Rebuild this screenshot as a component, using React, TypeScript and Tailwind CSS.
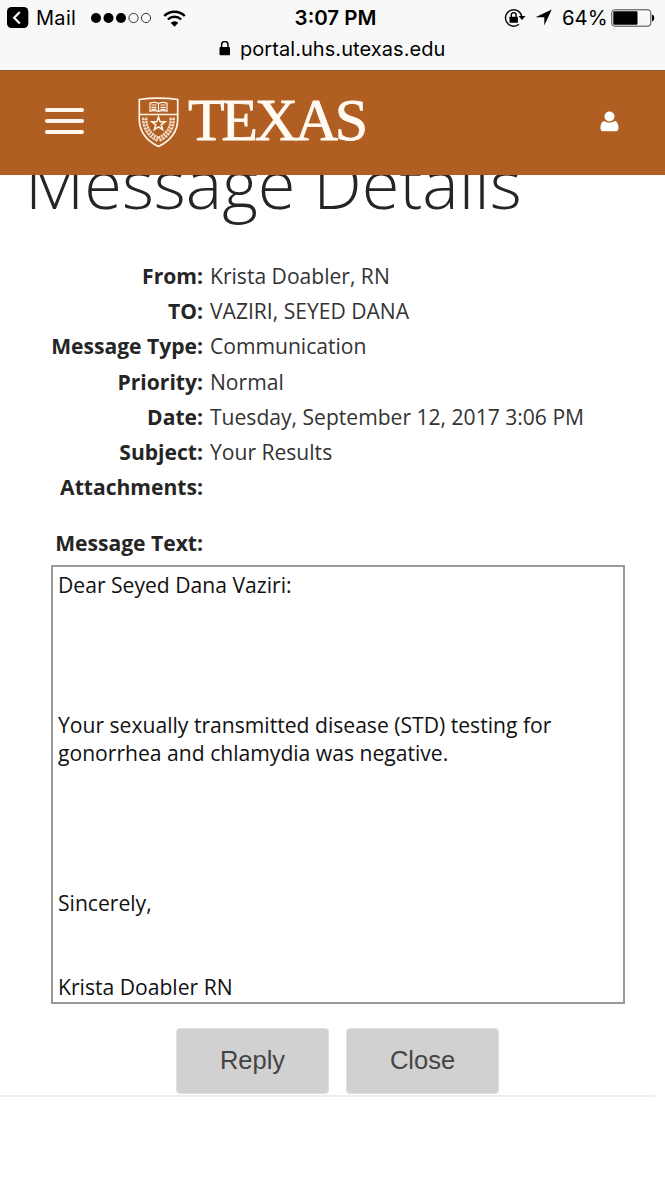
import React from "react";

const details: [string, string][] = [
  ["From:", "Krista Doabler, RN"],
  ["TO:", "VAZIRI, SEYED DANA"],
  ["Message Type:", "Communication"],
  ["Priority:", "Normal"],
  ["Date:", "Tuesday, September 12, 2017 3:06 PM"],
  ["Subject:", "Your Results"],
  ["Attachments:", ""],
];

function StatusBar() {
  return (
    <div className="h-[70px] bg-[#f8f8f8] font-['Inter',sans-serif] text-black">
      <div className="grid h-9 grid-cols-[1fr_auto_1fr] items-center whitespace-nowrap">
        <div className="flex items-center pl-[7px]">
          <svg width="22" height="22" viewBox="0 0 22 22">
            <rect x="0" y="0" width="21.3" height="21" rx="4.5" />
            <path d="M12.8 5 7.2 10.7l5.6 5.700" fill="none" stroke="#f8f8f8" strokeWidth="2.2" />
          </svg>
          <span className="ml-[7px] w-[55px] text-[20px] leading-none tracking-[0.3px]">Mail</span>
          <svg width="62" height="12" viewBox="0 0 62 12">
            <circle cx="5" cy="6" r="5" />
            <circle cx="17.5" cy="6" r="5" />
            <circle cx="30" cy="6" r="5" />
            <circle cx="42.5" cy="6" r="4.6" fill="none" stroke="#222" strokeWidth="0.9" />
            <circle cx="55" cy="6" r="4.6" fill="none" stroke="#222" strokeWidth="0.9" />
          </svg>
          <svg className="ml-[10px]" width="23" height="17" viewBox="0 0 23 17">
            <path d="M1.2 6A14.5 14.5 0 0 1 21.8 6M4.9 9.5a9.4 9.4 0 0 1 13.2 0" fill="none" stroke="#000" strokeWidth="2.4" />
            <path d="m11.5 16.7-3.8-4a5.4 5.4 0 0 1 7.6 0z" />
          </svg>
        </div>
        <span className="ml-[5px] pl-px pt-px text-[20.5px] font-semibold leading-none">3:07 PM</span>
        <div className="flex items-center justify-end pr-[9px]">
          <svg width="22" height="20" viewBox="0 0 22 20">
            <path d="M17.7 8A8.2 8.2 0 1 0 15 16.2" fill="none" stroke="#111" strokeWidth="1.5" />
            <path d="M14.5 8h7L18 12z" />
            <rect x="5.5" y="8.7" width="8.4" height="6" rx="0.6" />
            <path d="M7.3 9V7a2.4 2.4 0 0 1 4.8 0v2" fill="none" stroke="#000" strokeWidth="1.4" />
          </svg>
          <svg className="ml-[9px]" width="17" height="17" viewBox="0 0 17 17">
            <path d="M16.7.5 9.3 16.5V8.2H.5z" />
          </svg>
          <span className="ml-[10px] w-[49px] pt-px text-[20.3px] leading-none">64%</span>
          <svg width="45" height="18" viewBox="0 0 45 18">
            <rect x="0.8" y="0.8" width="39" height="16.4" rx="2.8" fill="none" stroke="#444" strokeWidth="1" />
            <rect x="2.3" y="2.3" width="24.200" height="13.4" rx="1.2" />
            <path d="M41 5.5c3 .8 3 6.200 0 7z" />
          </svg>
        </div>
      </div>
      <div className="flex items-center pl-[219px] pt-[2px]">
        <svg width="12" height="16" viewBox="0 0 12 16">
          <rect x="0.5" y="6" width="10.5" height="8.2" rx="1" />
          <path d="M2.6 6.500V3.800a3.200 3.200 0 0 1 6.400 0v2.700" fill="none" stroke="#000" strokeWidth="1.500" />
        </svg>
        <span className="ml-[9px] whitespace-nowrap text-[20px] leading-[22px] tracking-[0.060px]">portal.uhs.utexas.edu</span>
      </div>
    </div>
  );
}

function Shield() {
  return (
    <svg width="41" height="51" viewBox="0 0 41 51" fill="none" stroke="#fff5e8">
      <path d="M1.300 2.500Q20.500-.2 39.700 2.500V22c0 13-8 22-19.200 27.500C9.300 44 1.300 35 1.300 22z" strokeWidth="1.700" />
      <path d="M2 17.500h37" strokeWidth="1.500" />
      <path d="M20.500 6.500c-2.500-1.300-6-1.300-8.500-.4v8c3-.8 6-.8 8.500.4 2.500-1.200 5.500-1.200 8.500-.4v-8c-2.500-.9-6-.9-8.500.4zM20.500 6.500v8M13.500 8h5M13.500 10.300h5M13.500 12.300h5M22.500 8h5M22.500 10.300h5M22.500 12.300h5" strokeWidth="1.200" />
      <path d="m20.500 20 1.700 4.700h5l-4 3.100 1.500 4.900-4.200-2.900-4.200 2.900 1.500-4.900-4-3.100h5z" strokeWidth="1.500" />
      <path d="M6.800 20.500C6.500 31 11 38 20.500 42.500 30 38 34.500 31 34.200 20.500" strokeWidth="5.500" strokeDasharray="2.500 .6" opacity="0.800" />
      <path d="M6.800 20.500C6.500 31 11 38 20.500 42.500 30 38 34.500 31 34.200 20.500" stroke="#b15e22" strokeWidth="1.200" strokeDasharray="1.500 1.500" />
    </svg>
  );
}

function Header() {
  return (
    <header className="flex h-[105px] border-t border-[#8c5731] bg-[#b15e22]">
      <div className="ml-[45px] mt-[37px] flex h-[26px] w-[39px] flex-col justify-between">
        <span className="h-[4px] rounded-full bg-[#fff7ee]" />
        <span className="h-[4px] rounded-full bg-[#fff7ee]" />
        <span className="h-[4px] rounded-full bg-[#fff7ee]" />
      </div>
      <div className="ml-[54px] mt-[26px]">
        <Shield />
      </div>
      <span className="ml-[9px] mt-[18px] w-[190px] whitespace-nowrap font-['Liberation_Serif',serif] text-[60px] leading-[62px] tracking-[-3.300px] text-[#fffaf2] [-webkit-text-stroke:0.800px_#fffaf2]">
        TEXAS
      </span>
      <svg className="ml-[222px] mt-[40px]" width="19" height="21" viewBox="0 0 19 21" fill="#fff">
        <path d="M4.500 10C1.500 10.500.5 13.500.5 17c0 2 1 3.300 2.500 3.300h13c1.500 0 2.500-1.300 2.500-3.300 0-3.500-1-6.500-4-7-2.600 2.200-7.400 2.200-10 0z" />
        <circle cx="9.500" cy="5.500" r="5" />
      </svg>
    </header>
  );
}

export default function App() {
  return (
    <div className="h-[1182px] w-[665px] overflow-hidden bg-white font-['Open_Sans',sans-serif] text-[#252525]">
      <StatusBar />
      <Header />
      <main>
        <div className="h-[76px] overflow-hidden">
          <h1 className="-mt-[34px] ml-[25px] whitespace-nowrap text-[68.600px] font-light leading-[84px]">Message Details</h1>
        </div>
        <dl className="pt-[7px]">
          {details.map(([label, value]) => (
            <div key={label} className="flex h-[35.200px] items-center whitespace-nowrap text-[21.080px] leading-[35px]">
              <dt className="w-[203px] text-right font-bold">{label}</dt>
              <dd className="ml-[7px] text-[#333]">{value}</dd>
            </div>
          ))}
        </dl>
        <div className="mt-[21px] w-[203px] text-right text-[21.080px] font-bold leading-[35px]">Message Text:</div>
        <div className="ml-[51px] mt-[5px] h-[439px] w-[574px] whitespace-nowrap border-2 border-[#999] pl-[5px] pt-[4px] text-[21.120px] leading-[28px] text-[#111]">
          <p>Dear Seyed Dana Vaziri:</p>
          <p className="mt-[112px]">
            Your sexually transmitted disease (STD) testing for
            <br />
            gonorrhea and chlamydia was negative.
          </p>
          <p className="mt-[122px]">Sincerely,</p>
          <p className="mt-[56px]">Krista Doabler RN</p>
        </div>
        <div className="flex w-[655px] gap-[17px] border-b-2 border-[#eee] pb-px pl-[176px] pt-[24px] font-['Liberation_Sans',sans-serif] text-[25.500px] text-[#444]">
          <button className="h-[66px] w-[153px] rounded-[4px] border border-[#dedede] bg-[#d1d1d1] pb-[2px]">Reply</button>
          <button className="h-[66px] w-[153px] rounded-[4px] border border-[#dedede] bg-[#d1d1d1] pb-[2px]">Close</button>
        </div>
      </main>
    </div>
  );
}
